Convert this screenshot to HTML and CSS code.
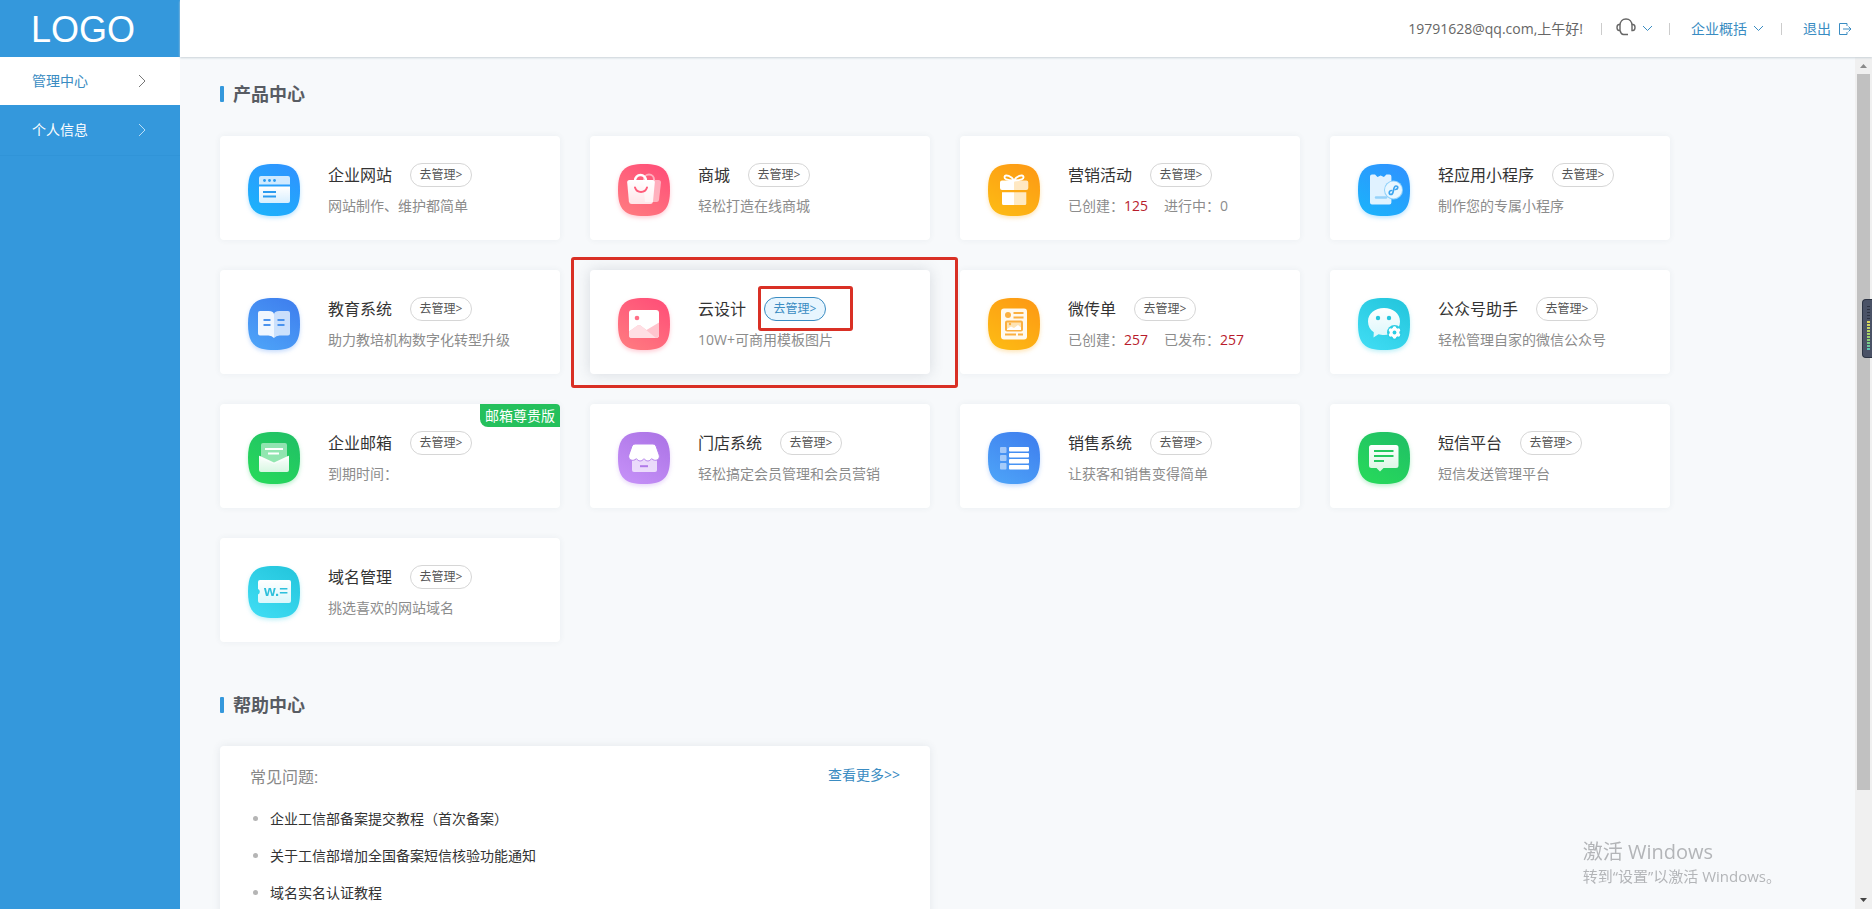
FILE: index.html
```html
<!DOCTYPE html>
<html lang="zh-CN">
<head>
<meta charset="utf-8">
<meta name="viewport" content="width=device-width, initial-scale=1">
<title>管理中心</title>
<link rel="stylesheet" href="styles.css">
</head>
<body>
<svg class="defs" width="0" height="0" aria-hidden="true">
  <defs>
    <linearGradient id="g-sky" x1="0.8" y1="0" x2="0.2" y2="1"><stop offset="0" stop-color="#2e93ff"/><stop offset="1" stop-color="#1cb2fb"/></linearGradient>
    <linearGradient id="g-blue" x1="0.8" y1="0" x2="0.2" y2="1"><stop offset="0" stop-color="#3f7fee"/><stop offset="1" stop-color="#4da3f8"/></linearGradient>
    <linearGradient id="g-red" x1="0.8" y1="0" x2="0.2" y2="1"><stop offset="0" stop-color="#ff4f78"/><stop offset="1" stop-color="#ff7a80"/></linearGradient>
    <linearGradient id="g-orange" x1="0.8" y1="0" x2="0.2" y2="1"><stop offset="0" stop-color="#fd9a14"/><stop offset="1" stop-color="#fdba14"/></linearGradient>
    <linearGradient id="g-cyan" x1="0.8" y1="0" x2="0.2" y2="1"><stop offset="0" stop-color="#24c6dd"/><stop offset="1" stop-color="#3fdcf3"/></linearGradient>
    <linearGradient id="g-green" x1="0.8" y1="0" x2="0.2" y2="1"><stop offset="0" stop-color="#20c065"/><stop offset="1" stop-color="#27d95b"/></linearGradient>
    <linearGradient id="g-purple" x1="0.8" y1="0" x2="0.2" y2="1"><stop offset="0" stop-color="#ac74e6"/><stop offset="1" stop-color="#c590f7"/></linearGradient>
    <linearGradient id="g-fade" x1="0" y1="0" x2="0" y2="1"><stop offset="0" stop-color="#fff"/><stop offset="1" stop-color="#fff" stop-opacity="0.82"/></linearGradient>
    <path id="tile" d="M0 26C0 6.500 6.500 0 26 0S52 6.500 52 26 45.500 52 26 52 0 45.500 0 26Z"/>
  </defs>
</svg>
<div class="app">
  <aside class="sidebar">
    <div class="logo">LOGO</div>
    <nav class="menu">
      <a class="menu-item active" href="#">管理中心
        <svg width="8" height="14" viewBox="0 0 8 14"><path d="M1 1l6 6-6 6"/></svg></a>
      <a class="menu-item" href="#">个人信息
        <svg width="8" height="14" viewBox="0 0 8 14"><path d="M1 1l6 6-6 6"/></svg></a>
    </nav>
  </aside>
  <div class="page">
    <header class="topbar">
      <span class="greeting">19791628@qq.com,上午好!</span>
      <button class="top-action support" type="button" aria-label="客服">
        <svg class="headset" width="20" height="18" viewBox="0 0 20 18"><path d="M4 7.500C4 3.500 6.500 1 10 1s6 2.500 6 6.500M4 6.500v6H3.200C1.800 12.500 1 11.300 1 9.500s.8-3 2.200-3zM16 6.500v6h.8c1.400 0 2.200-1.200 2.200-3s-.8-3-2.200-3zM4 12.500c.5 2.200 1.500 3.800 3.500 4H12"/></svg>
        <svg class="caret" width="11" height="7" viewBox="0 0 11 7"><path d="M1 1l4.500 4.500L10 1"/></svg>
      </button>
      <button class="top-action overview" type="button">企业概括
        <svg class="caret" width="11" height="7" viewBox="0 0 11 7"><path d="M1 1l4.500 4.500L10 1"/></svg>
      </button>
      <a class="top-action logout" href="#">退出
        <svg class="exit" width="13" height="12" viewBox="0 0 13 12"><path d="M8 3V.5H.5v11H8V9M4 6h8M9.500 3.500L12 6 9.500 8.500"/></svg>
      </a>
    </header>
    <div class="viewport">
      <main class="content">
        <h2 class="section-title">产品中心</h2>
        <div class="cards">
          <article class="card">
            <svg class="icon sky" viewBox="0 0 52 52"><use href="#tile" fill="url(#g-sky)"/><path d="M11 20.500V14q0-2 2-2h27q2 0 2 2v6.500z" fill="#fff" opacity=".78"/><path d="M11 22.500h31V37q0 2-2 2H13q-2 0-2-2z" fill="url(#g-fade)"/><g fill="#2b9bf0"><circle cx="16.500" cy="16.500" r="1.400"/><circle cx="21.500" cy="16.500" r="1.400"/><circle cx="26.500" cy="16.500" r="1.400"/><path d="M15 27h13v2H15zM15 31.500h13v2H15z"/></g></svg>
            <div class="info"><div class="head"><h3>企业网站</h3><button class="manage" type="button">去管理&gt;</button></div><p>网站制作、维护都简单</p></div>
          </article>
          <article class="card">
            <svg class="icon red" viewBox="0 0 52 52"><use href="#tile" fill="url(#g-red)"/><g opacity=".5"><path d="M26 17v-1.500a5 5 0 0 1 10 0V17" fill="none" stroke="#fff" stroke-width="2"/><path d="M25 16h15.500q2.500 0 2.500 2.500L41 36q-.3 2-2.500 2H27z" fill="#fff"/></g><path d="M17 17v-.500a5.500 5.500 0 0 1 11 0v.5" fill="none" stroke="#fff" stroke-width="2.400"/><path d="M11.500 16h23q2.500 0 2.300 2.500L35 37.500q-.3 2.500-2.800 2.500h-18.500q-2.500 0-2.800-2.500L9.200 18.500Q9 16 11.500 16z" fill="url(#g-fade)"/><path d="M17 23.500q1.500 4.500 6 4.500t6-4.500" fill="none" stroke="#ff5c7a" stroke-width="2" stroke-linecap="round"/></svg>
            <div class="info"><div class="head"><h3>商城</h3><button class="manage" type="button">去管理&gt;</button></div><p>轻松打造在线商城</p></div>
          </article>
          <article class="card">
            <svg class="icon orange" viewBox="0 0 52 52"><use href="#tile" fill="url(#g-orange)"/><path d="M26 16.500c-2-4-9-7-9.500-3.500-.3 2 2 3 9.500 3.500 7.500-.5 9.800-1.500 9.500-3.500-.5-3.500-7.500-.5-9.500 3.500z" fill="none" stroke="#fff" stroke-width="1.900"/><path d="M14 16.500h12V26H14q-2 0-2-2v-5.500q0-2 2-2zM14 28.200h12V41H15.500q-1.500 0-1.500-1.500z" fill="#fff"/><path d="M26 16.500h12.300q2 0 2 2V24q0 2-2 2H26zM26 28.200h12.300v11.300q0 1.500-1.500 1.500H26z" fill="#fff" opacity=".74"/></svg>
            <div class="info"><div class="head"><h3>营销活动</h3><button class="manage" type="button">去管理&gt;</button></div><p class="stats"><span>已创建：<b>125</b></span><span>进行中：0</span></p></div>
          </article>
          <article class="card">
            <svg class="icon sky" viewBox="0 0 52 52"><use href="#tile" fill="url(#g-sky)"/><path d="M14 10.500h3l2.500 2.500 3.200-1.500 3.200 1.500 2.500-2.500h3q2 0 2 2v26q0 2-2 2H14q-2 0-2-2v-26q0-2 2-2z" fill="#fff" opacity=".86"/><path d="M18 33.500h10" stroke="#4db3f5" stroke-width="2.500" opacity=".5" stroke-linecap="round"/><circle cx="35.500" cy="26" r="9.500" fill="#8fd0fa"/><circle cx="35.500" cy="26" r="8.500" fill="#e9f7ff"/><path d="M33.500 26.500c-2.600 0-3.200 4-.5 4 3.500 0 1.500-8.500 5-8.500 2.700 0 2.100 3.500-.5 3.500" fill="none" stroke="#3da5ef" stroke-width="1.700" stroke-linecap="round"/></svg>
            <div class="info"><div class="head"><h3>轻应用小程序</h3><button class="manage" type="button">去管理&gt;</button></div><p>制作您的专属小程序</p></div>
          </article>
          <article class="card">
            <svg class="icon blue" viewBox="0 0 52 52"><use href="#tile" fill="url(#g-blue)"/><path d="M10 15q0-2 2-2h8.500q5.500 0 5.500 3.500V40q-2-2.500-5.500-2.500H12q-2 0-2-2z" fill="#fff" opacity=".92"/><path d="M42 15q0-2-2-2h-8.500q-5.500 0-5.500 3.500V40q2-2.500 5.500-2.500H40q2 0 2-2z" fill="#fff" opacity=".72"/><path d="M15.500 22h7M15.500 27h7M29.500 22h7M29.500 27h7" stroke="#4a93ee" stroke-width="2"/></svg>
            <div class="info"><div class="head"><h3>教育系统</h3><button class="manage" type="button">去管理&gt;</button></div><p>助力教培机构数字化转型升级</p></div>
          </article>
          <article class="card hovered">
            <svg class="icon red" viewBox="0 0 52 52"><use href="#tile" fill="url(#g-red)"/><rect x="11" y="12" width="30" height="28" rx="3" fill="#fff"/><path d="M11 33.500l8.500-6q1.500-1 3 0l6 4.500L41 24.500V37q0 3-3 3H14q-3 0-3-3z" fill="#ffc4cd"/><path d="M11 33.500l8.500-6q1.500-1 3 0L38 40H14q-3 0-3-3z" fill="#ffdfe4"/><circle cx="19" cy="20" r="2.300" fill="#ff7088"/></svg>
            <div class="info"><div class="head"><h3>云设计</h3><span class="manage-wrap"><button class="manage current" type="button">去管理&gt;</button></span></div><p>10W+可商用模板图片</p></div>
          </article>
          <article class="card">
            <svg class="icon orange" viewBox="0 0 52 52"><use href="#tile" fill="url(#g-orange)"/><rect x="13" y="10.500" width="26" height="31" rx="3" fill="#fff" opacity=".93"/><g fill="#fbb040"><circle cx="20" cy="17" r="3"/><path d="M25.500 14h10v2h-10zM25.500 18.500h10v2h-10zM17 35.500h11v2H17zM30 35.500h5v2h-5z"/></g><rect x="18" y="23.500" width="16" height="9" rx="1" fill="#fde3b4" stroke="#fbb040" stroke-width="2"/><path d="M19 31l4-2.500 3 1.500 4-3 3 2.500V32H19z" fill="#fff"/><circle cx="22" cy="26" r="1.200" fill="#fbb040"/></svg>
            <div class="info"><div class="head"><h3>微传单</h3><button class="manage" type="button">去管理&gt;</button></div><p class="stats"><span>已创建：<b>257</b></span><span>已发布：<b>257</b></span></p></div>
          </article>
          <article class="card">
            <svg class="icon cyan" viewBox="0 0 52 52"><use href="#tile" fill="url(#g-cyan)"/><path d="M26 10c9 0 16 5.500 16 13.500S35 37 26 37c-2 0-4-.2-5.500-.7L15.500 39.500l.3-5.200C12.200 31.800 10 28 10 23.500 10 15.500 17 10 26 10z" fill="url(#g-fade)"/><circle cx="20" cy="20" r="2.200" fill="#26c5dd"/><circle cx="31" cy="20" r="2.200" fill="#26c5dd"/><circle cx="36.500" cy="34.500" r="7.500" fill="#2dcde4"/><circle cx="36.500" cy="34.500" r="4.800" fill="#fff"/><path d="M36.500 30v9M32.600 32.200l7.800 4.600M32.600 36.800l7.800-4.600" stroke="#fff" stroke-width="3.600" stroke-linecap="round"/><circle cx="36.500" cy="34.500" r="1.900" fill="#2dcde4"/></svg>
            <div class="info"><div class="head"><h3>公众号助手</h3><button class="manage" type="button">去管理&gt;</button></div><p>轻松管理自家的微信公众号</p></div>
          </article>
          <article class="card">
            <svg class="icon green" viewBox="0 0 52 52"><use href="#tile" fill="url(#g-green)"/><path d="M13 27V13q0-2 2-2h22q2 0 2 2v14l-13 5z" fill="#fff" opacity=".5"/><path d="M17 17h18M20 21.500h11" stroke="#fff" stroke-width="2"/><path d="M11 24.500q0-1 1-.5l14 6.500L40 24q1-.5 1 .5V38q0 2-2 2H13q-2 0-2-2z" fill="url(#g-fade)"/></svg>
            <div class="info"><div class="head"><h3>企业邮箱</h3><button class="manage" type="button">去管理&gt;</button></div><p>到期时间：</p></div>
            <span class="badge">邮箱尊贵版</span>
          </article>
          <article class="card">
            <svg class="icon purple" viewBox="0 0 52 52"><use href="#tile" fill="url(#g-purple)"/><path d="M14 27h25v11q0 2-2 2H16q-2 0-2-2z" fill="#fff" opacity=".7"/><path d="M22 34.200h8" stroke="#b07ae9" stroke-width="2"/><path d="M17 12h18q2 0 3 2l3.200 9c1.300 5-4.200 7-7.600 3.700-2.300 3-5.300 3-7.600 0-2.300 3-5.300 3-7.600 0C15 30 9.500 28 10.800 23L14 14q1-2 3-2z" fill="#fff" stroke="#b47fec" stroke-width="1"/></svg>
            <div class="info"><div class="head"><h3>门店系统</h3><button class="manage" type="button">去管理&gt;</button></div><p>轻松搞定会员管理和会员营销</p></div>
          </article>
          <article class="card">
            <svg class="icon blue" viewBox="0 0 52 52"><use href="#tile" fill="url(#g-blue)"/><g fill="#fff"><rect x="21" y="15" width="20" height="4.500" rx="1"/><rect x="21" y="21" width="20" height="4.500" rx="1"/><rect x="21" y="27" width="20" height="4.500" rx="1"/><rect x="21" y="33" width="20" height="4.500" rx="1"/><g opacity=".5"><rect x="12" y="15" width="6.500" height="6" rx="1"/><rect x="12" y="23" width="6.500" height="6" rx="1"/><rect x="12" y="31" width="6.500" height="6.500" rx="1"/></g></g></svg>
            <div class="info"><div class="head"><h3>销售系统</h3><button class="manage" type="button">去管理&gt;</button></div><p>让获客和销售变得简单</p></div>
          </article>
          <article class="card">
            <svg class="icon green" viewBox="0 0 52 52"><use href="#tile" fill="url(#g-green)"/><path d="M13.500 13H38q2.500 0 2.500 2.500v18Q40.500 36 38 36H25.500L22 39.500 18.500 36h-5Q11 36 11 33.500v-18Q11 13 13.500 13z" fill="url(#g-fade)"/><path d="M16 19h19.500M16 24h19.500M16 29h10" stroke="#24ca60" stroke-width="2.200"/></svg>
            <div class="info"><div class="head"><h3>短信平台</h3><button class="manage" type="button">去管理&gt;</button></div><p>短信发送管理平台</p></div>
          </article>
          <article class="card">
            <svg class="icon cyan" viewBox="0 0 52 52"><use href="#tile" fill="url(#g-cyan)"/><path d="M12 14h29q2 0 2 2v19q0 2-2 2H12q-2 0-2-2v-6.500a3 3 0 0 0 0-5.500v-7q0-2 2-2z" fill="url(#g-fade)"/><text class="mark" x="16" y="30">w.=</text></svg>
            <div class="info"><div class="head"><h3>域名管理</h3><button class="manage" type="button">去管理&gt;</button></div><p>挑选喜欢的网站域名</p></div>
          </article>
        </div>
        <h2 class="section-title help-title">帮助中心</h2>
        <section class="help">
          <div class="help-head"><h3>常见问题:</h3><a href="#">查看更多&gt;&gt;</a></div>
          <ul>
            <li><a href="#">企业工信部备案提交教程（首次备案）</a></li>
            <li><a href="#">关于工信部增加全国备案短信核验功能通知</a></li>
            <li><a href="#">域名实名认证教程</a></li>
          </ul>
        </section>
      </main>
      <div class="scrollbar" aria-hidden="true">
        <svg class="up" width="7" height="4" viewBox="0 0 7 4"><path d="M0 4l3.500-4L7 4z"/></svg>
        <div class="track"><div class="thumb"></div></div>
        <svg class="down" width="7" height="4" viewBox="0 0 7 4"><path d="M0 0l3.500 4L7 0z"/></svg>
      </div>
    </div>
  </div>
</div>
<div class="meter" aria-hidden="true"><div class="meter-off"></div><div class="meter-on"></div></div>
<div class="watermark"><div class="watermark-title">激活 Windows</div><div>转到“设置”以激活 Windows。</div></div>
</body>
</html>
```
FILE: styles.css
```css
* { box-sizing: border-box; }

body {
  margin: 0;
  font: 14px/20px "Open Sans", "Noto Sans CJK SC", sans-serif;
  color: #333;
}

h2, h3, p, ul { margin: 0; padding: 0; font-weight: 400; }
a { color: inherit; text-decoration: none; }
button { font: inherit; color: inherit; background: none; border: 0; padding: 0; cursor: pointer; }
.defs { position: absolute; }

.app { display: flex; height: 100vh; background: #f7f9fb; }

.sidebar { flex: none; width: 180px; background: #3498dc; }
.logo {
  height: 57px;
  padding-left: 31px;
  font: 36px/60px "Liberation Sans", Arial, sans-serif;
  color: #fff;
}
.menu-item {
  display: flex;
  align-items: center;
  justify-content: space-between;
  height: 51px;
  padding: 0 34px 0 32px;
  color: #fff;
  border-bottom: 1px solid #3094d8;
}
.menu-item.active { height: 48px; color: #3a8cc2; background: #fff; border: 0; }
.menu-item svg { fill: none; stroke: #b9def7; }
.menu-item.active svg { stroke: #777; }

.page { flex: 1; min-width: 0; display: flex; flex-direction: column; }
.topbar {
  position: relative;
  flex: none;
  display: flex;
  align-items: center;
  justify-content: flex-end;
  height: 57px;
  padding-right: 20px;
  background: #fff;
  box-shadow: 0 1px 2px #c9d2d8;
}
.greeting { color: #666; }
.top-action { display: flex; align-items: center; gap: 6px; color: #3a8cc2; }
.top-action::before { content: ""; width: 1px; height: 12px; background: #ccc; }
.top-action svg { fill: none; stroke: currentColor; }
.support { margin-left: 18px; }
.support::before { margin-right: 8px; }
.top-action .headset { stroke: #666; stroke-width: 1.4; margin-bottom: 4px; }
.overview { margin-left: 16px; }
.overview::before { margin-right: 15px; }
.logout { margin-left: 17px; gap: 8px; }
.logout::before { margin-right: 13px; }

.viewport { flex: 1; min-height: 0; display: flex; }
.content { flex: 1; min-width: 0; overflow-y: auto; scrollbar-width: none; padding: 25px 0 0 40px; }

.section-title {
  display: flex;
  align-items: center;
  gap: 9px;
  height: 24px;
  font-size: 18px;
  line-height: 24px;
  font-weight: 700;
  color: #585c63;
}
.section-title::before { content: ""; width: 4px; height: 16px; border-radius: 1px; background: #3498dc; }

.cards {
  display: grid;
  grid-template-columns: repeat(auto-fill, 340px);
  gap: 30px;
  margin-top: 30px;
}
.card {
  position: relative;
  display: flex;
  gap: 28px;
  padding: 27px 28px 24px;
  background: #fff;
  border-radius: 4px;
  box-shadow: 0 0 6px rgba(60, 80, 100, 0.07);
}
.card.hovered { box-shadow: 0 0 14px rgba(60, 70, 90, 0.17); }
.card.hovered::after {
  content: "";
  position: absolute;
  inset: -13px -28px -14px -19px;
  border: 3px solid #d93025;
  border-radius: 3px;
  pointer-events: none;
}
.icon { flex: none; width: 52px; height: 52px; margin-top: 1px; overflow: visible; }
.sky { filter: drop-shadow(0 2px 2px rgba(40, 170, 255, 0.3)); }
.blue { filter: drop-shadow(0 2px 2px rgba(70, 140, 245, 0.3)); }
.red { filter: drop-shadow(0 2px 2px rgba(255, 90, 120, 0.3)); }
.orange { filter: drop-shadow(0 2px 2px rgba(253, 170, 20, 0.3)); }
.cyan { filter: drop-shadow(0 2px 2px rgba(45, 205, 228, 0.3)); }
.green { filter: drop-shadow(0 2px 2px rgba(36, 202, 96, 0.3)); }
.purple { filter: drop-shadow(0 2px 2px rgba(180, 127, 236, 0.3)); }
.mark { font: 700 15px "Liberation Sans", sans-serif; fill: #2ec0dc; }

.info { display: flex; flex-direction: column; gap: 9px; white-space: nowrap; color: #8c8c8c; }
.head { display: flex; align-items: center; gap: 18px; height: 24px; }
.head h3 { font-size: 16px; line-height: 24px; color: #333; }
.manage {
  display: block;
  min-width: 62px;
  height: 24px;
  border: 1px solid #d6d6d6;
  border-radius: 12px;
  font-size: 12px;
  line-height: 22px;
  color: #555;
}
.manage.current { color: #3a8cc2; border-color: #3a8cc2; background: #e8f5fe; }
.manage-wrap { position: relative; }
.manage-wrap::after {
  content: "";
  position: absolute;
  inset: -11px -27px -10px -6px;
  border: 3px solid #d93025;
  border-radius: 3px;
  pointer-events: none;
}
.stats { display: flex; gap: 16px; }
.stats b { font-weight: 400; color: #b81c2c; }
.badge {
  position: absolute;
  top: 0;
  right: 0;
  padding: 0 5px;
  line-height: 23px;
  color: #fff;
  background: #25c05c;
  border-radius: 0 4px 0 8px;
}

.help-title { margin-top: 51px; }
.help {
  width: 710px;
  max-width: 100%;
  margin-top: 29px;
  padding: 19px 30px 40px;
  background: #fff;
  border-radius: 4px;
  box-shadow: 0 0 8px rgba(60, 80, 100, 0.1);
}
.help-head { display: flex; justify-content: space-between; height: 24px; color: #3a8cc2; }
.help-head h3 { font-size: 16px; line-height: 24px; color: #888; }
.help ul { list-style: none; margin-top: 11px; }
.help li { display: flex; align-items: center; gap: 12px; height: 37px; padding-left: 3px; }
.help li::before { content: ""; width: 5px; height: 5px; border-radius: 50%; background: #b5b5b5; }

.scrollbar {
  flex: none;
  width: 17px;
  display: flex;
  flex-direction: column;
  align-items: center;
  justify-content: space-between;
  padding: 7px 0;
  background: #f0f0f0;
}
.scrollbar .up { fill: #8a8a8a; }
.scrollbar .down { fill: #444; }
.track { flex: 1; width: 13px; margin: 6px 0; }
.thumb { height: 87.5%; background: #c1c1c1; }

.meter {
  position: fixed;
  right: 0;
  top: 299px;
  width: 10px;
  padding: 6px 2px 6px 4px;
  border: 1px solid #2c3444;
  border-right: 0;
  border-radius: 4px 0 0 4px;
  background: #4a5266;
}
.meter-off { height: 15px; background: repeating-linear-gradient(#2d3342 0 1px, #4a5266 1px 3px); }
.meter-on {
  height: 30px;
  background:
    repeating-linear-gradient(transparent 0 2px, #4a5266 2px 3px),
    linear-gradient(#e3d85c, #8fd06c 60%, #4fc3c0);
}

.watermark {
  position: fixed;
  right: 91px;
  bottom: 21px;
  font-size: 15px;
  line-height: 24px;
  color: #b3b5b8;
  pointer-events: none;
}
.watermark-title { font-size: 20px; }
```
